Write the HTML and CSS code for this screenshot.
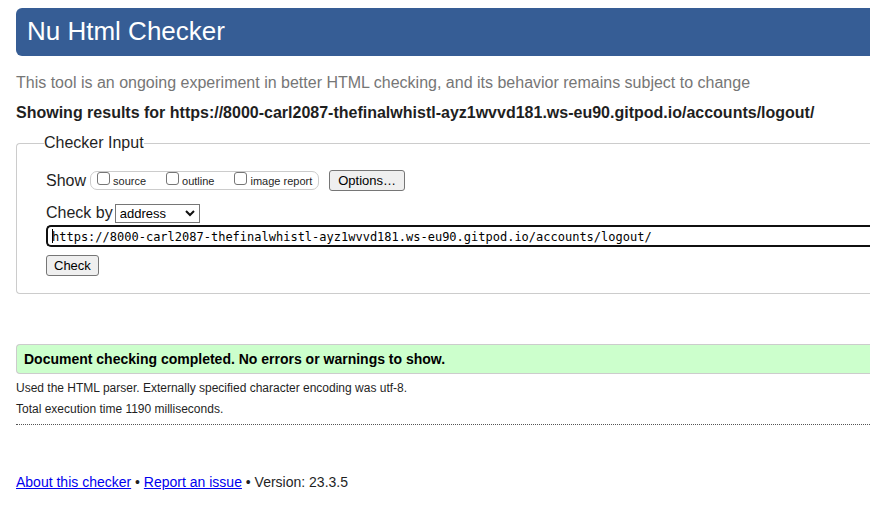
FILE: index.html
```html
<!DOCTYPE html>
<html lang="en">
<head>
<meta charset="utf-8">
<title>Nu Html Checker</title>
<link rel="stylesheet" href="styles.css">
</head>
<body>
<header class="banner"><h1>Nu Html Checker</h1></header>
<main>
  <p class="intro">This tool is an ongoing experiment in better HTML checking, and its behavior remains subject to change</p>
  <h2>Showing results for https://8000-carl2087-thefinalwhistl-ayz1wvvd181.ws-eu90.gitpod.io/accounts/logout/</h2>
  <form>
    <fieldset class="checker">
      <legend>Checker Input</legend>
      <div class="row show-row">
        <span>Show</span>
        <div class="show-options">
          <label><input type="checkbox" name="showsource"><span>source</span></label>
          <label><input type="checkbox" name="showoutline"><span>outline</span></label>
          <label><input type="checkbox" name="showimagereport"><span>image report</span></label>
        </div>
        <button class="options-button" type="button">Options…</button>
      </div>
      <div class="row method-row">
        <label for="method">Check by</label>
        <span class="select">
          <select id="method"><option>address</option><option>file upload</option><option>text input</option></select>
          <svg class="chevron" viewBox="0 0 10 7" aria-hidden="true"><path d="M1 1l4 4 4-4"/></svg>
        </span>
      </div>
      <input class="address" type="url" aria-label="Address" value="https://8000-carl2087-thefinalwhistl-ayz1wvvd181.ws-eu90.gitpod.io/accounts/logout/">
      <button type="submit">Check</button>
    </fieldset>
  </form>
  <section class="results">
    <p class="success">Document checking completed. No errors or warnings to show.</p>
    <p class="detail">Used the HTML parser. Externally specified character encoding was utf-8.</p>
    <p class="detail">Total execution time 1190 milliseconds.</p>
  </section>
</main>
<footer><a href="#about">About this checker</a> • <a href="#issues">Report an issue</a> • Version: 23.3.5</footer>
</body>
</html>
```
FILE: styles.css
```css
* {
  box-sizing: border-box;
}

body {
  margin: 0;
  padding: 8px 0 0 16px;
  background: #fff;
  color: #1f1f1f;
  font: 16px/20px "Liberation Sans", Arial, sans-serif;
}

h1, h2, p {
  margin: 0;
}

.banner {
  padding: 7px 11px 9px;
  border-radius: 6px 0 0 6px;
  background: #365d95;
  color: #fff;
}

h1 {
  font-size: 26px;
  font-weight: 400;
  line-height: 32px;
}

.intro {
  margin-top: 17px;
  color: #767676;
}

h2 {
  margin-top: 10px;
  font-size: 16px;
}

.checker {
  min-width: 0;
  margin: 10px 0 0;
  padding: 17px 0 17px 29px;
  border: 1px solid #ccc;
  border-right: 0;
  border-radius: 4px 0 0 4px;
}

legend {
  margin-left: -2px;
  padding: 0;
}

.row {
  display: flex;
  align-items: center;
}

.show-row {
  line-height: 18px;
}

.show-options {
  display: flex;
  align-items: center;
  gap: 20px;
  height: 19px;
  margin: 0 10px 0 4px;
  padding: 0 6px;
  border: 1px solid #ccc;
  border-radius: 7px;
  font-size: 11px;
}

.show-options label {
  display: flex;
  align-items: flex-start;
  gap: 3px;
  height: 18px;
}

.show-options span {
  line-height: 18px;
}

input[type="checkbox"] {
  appearance: none;
  width: 13px;
  height: 13px;
  margin: 0;
  border: 1px solid #767676;
  border-radius: 3px;
  background: #fff;
}

button {
  display: block;
  height: 21px;
  padding: 0 7px;
  border: 1px solid #767676;
  border-radius: 3px;
  background: #efefef;
  color: #000;
  font: 13px/19px "Liberation Sans", Arial, sans-serif;
}

.options-button {
  padding: 0 8px;
}

.method-row {
  gap: 2px;
  margin-top: 12px;
}

.select {
  position: relative;
  display: flex;
}

select {
  appearance: none;
  width: 85px;
  height: 19px;
  padding: 0 4px;
  border: 1px solid #767676;
  border-radius: 0;
  background: #fff;
  color: #000;
  font: 13px/17px "Liberation Sans", Arial, sans-serif;
}

.chevron {
  position: absolute;
  top: 6px;
  right: 5px;
  width: 10px;
  height: 7px;
  fill: none;
  stroke: #101010;
  stroke-width: 2;
  pointer-events: none;
}

/* The gradient draws the insertion point at the start of the field. */
.address {
  display: block;
  width: 100%;
  height: 22px;
  margin: 2px 0 8px;
  padding: 2px 4px 0;
  border: 2px solid #101010;
  border-right: 0;
  border-radius: 5px 0 0 5px;
  background: #fff linear-gradient(#000, #000) 4px 2px / 1px 14px no-repeat;
  color: #000;
  font: 12px/16px "DejaVu Sans Mono", monospace;
}

.results {
  margin-top: 50px;
  padding-bottom: 4px;
  border-bottom: 1px dotted #555;
}

.success {
  margin-bottom: 4px;
  padding: 4px 7px;
  border: 1px solid #ccc;
  border-right: 0;
  border-radius: 4px 0 0 4px;
  background: #cfc;
  color: #000;
  font-size: 14px;
  font-weight: 700;
}

.detail {
  font-size: 12px;
  line-height: 21px;
}

footer {
  margin-top: 47px;
  font-size: 14px;
}

a {
  color: #00e;
}
```
